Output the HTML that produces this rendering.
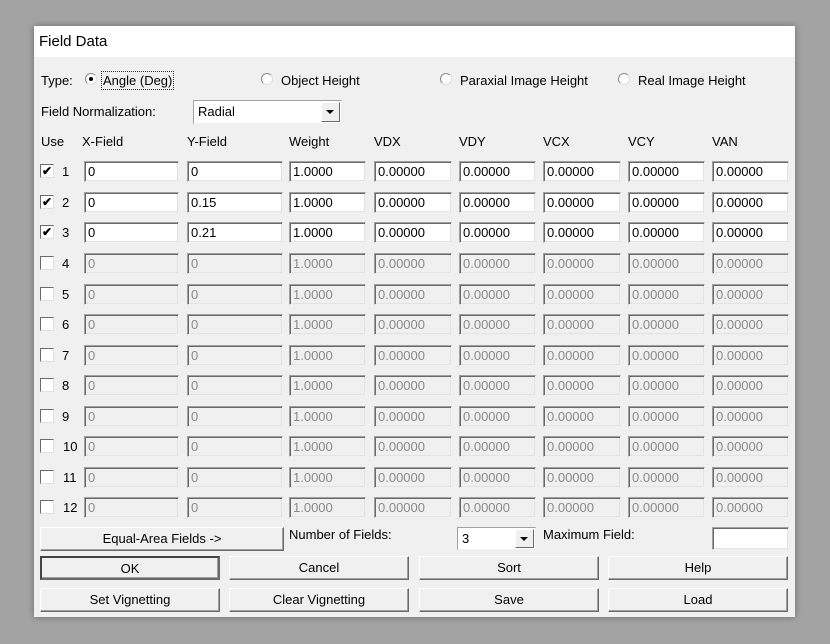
<!DOCTYPE html>
<html><head><meta charset="utf-8"><style>
*{box-sizing:border-box;margin:0;padding:0}
body{width:830px;height:644px;background:#a3a3a3;position:relative;overflow:hidden;font-family:"Liberation Sans",sans-serif;font-size:13px;color:#000}
.win{position:absolute;left:34px;top:26px;width:761px;height:591px;background:#f0f0f0;box-shadow:0 0 6px rgba(0,0,0,.35)}
.title{position:absolute;left:34px;top:26px;width:761px;height:31px;background:#fff;font-size:15px;padding:7px 0 0 5px}
.a{position:absolute;white-space:nowrap}
.in{position:absolute;height:21px;background:#fff;border-top:1px solid #a0a0a0;border-left:1px solid #a0a0a0;border-bottom:1px solid #f0f0f0;border-right:1px solid #f0f0f0;box-shadow:inset 1px 1px 0 #696969,inset -1px -1px 0 #e3e3e3;padding:2px 0 0 3px;font-size:13px;line-height:15px;overflow:hidden;white-space:nowrap}
.d .in{background:#f0f0f0;color:#8a8a8a}
.row{position:absolute;left:0;width:830px;height:21px}
.c1{left:84px;width:95px}.c2{left:187px;width:96px}.c3{left:289px;width:77px}.c4{left:374px;width:78px}.c5{left:459px;width:77px}.c6{left:543px;width:78px}.c7{left:628px;width:77px}.c8{left:712px;width:77px}
.cb{position:absolute;left:40px;top:3px;width:14px;height:14px;background:#fff;border:1px solid #6a6a6a;border-right-color:#e0e0e0;border-bottom-color:#e0e0e0;font-size:12px;line-height:12px;text-align:center;font-weight:bold}
.n{position:absolute;left:62px;top:3px}
.rad{position:absolute;width:12px;height:12px;border-radius:50%;background:#fff;border:1px solid #8a8a8a;border-right-color:#ddd;border-bottom-color:#ddd}
.btn{position:absolute;height:24px;background:#f0f0f0;border:1px solid #fff;border-right-color:#696969;border-bottom-color:#696969;box-shadow:inset -1px -1px 0 #a0a0a0;text-align:center;line-height:22px}
.combo{position:absolute;background:#fff;border:1px solid #a0a0a0;border-right-color:#f0f0f0;border-bottom-color:#f0f0f0;padding:3px 0 0 4px}
.arr{position:absolute;right:1px;top:1px;width:19px;bottom:1px;background:#f0f0f0;border:1px solid #fff;border-right-color:#696969;border-bottom-color:#696969}
.arr:after{content:"";position:absolute;left:4px;top:7px;border-left:4px solid transparent;border-right:4px solid transparent;border-top:4px solid #000}
</style></head><body>
<div class="win"></div>
<div class="title">Field Data</div>
<div class="a" style="left:41px;top:73px">Type:</div>
<div class="rad" style="left:85px;top:73px"><div style="position:absolute;left:3px;top:3px;width:4px;height:4px;border-radius:50%;background:#000"></div></div>
<div class="a" style="left:101px;top:71px;border:1px dotted #333;padding:1px">Angle (Deg)</div>
<div class="rad" style="left:261px;top:73px"></div><div class="a" style="left:281px;top:73px">Object Height</div>
<div class="rad" style="left:440px;top:73px"></div><div class="a" style="left:460px;top:73px">Paraxial Image Height</div>
<div class="rad" style="left:618px;top:73px"></div><div class="a" style="left:638px;top:73px">Real Image Height</div>
<div class="a" style="left:41px;top:104px">Field Normalization:</div>
<div class="combo" style="left:193px;top:100px;width:149px;height:24px">Radial<div class="arr"></div></div>
<div class="a" style="left:41px;top:134px">Use</div><div class="a" style="left:82px;top:134px">X-Field</div><div class="a" style="left:187px;top:134px">Y-Field</div><div class="a" style="left:289px;top:134px">Weight</div><div class="a" style="left:374px;top:134px">VDX</div><div class="a" style="left:459px;top:134px">VDY</div><div class="a" style="left:543px;top:134px">VCX</div><div class="a" style="left:628px;top:134px">VCY</div><div class="a" style="left:712px;top:134px">VAN</div>

<div class="row" style="top:161px"><div class="cb">✔</div><div class="n">1</div><div class="in c1">0</div><div class="in c2">0</div><div class="in c3">1.0000</div><div class="in c4">0.00000</div><div class="in c5">0.00000</div><div class="in c6">0.00000</div><div class="in c7">0.00000</div><div class="in c8">0.00000</div></div>
<div class="row" style="top:192px"><div class="cb">✔</div><div class="n">2</div><div class="in c1">0</div><div class="in c2">0.15</div><div class="in c3">1.0000</div><div class="in c4">0.00000</div><div class="in c5">0.00000</div><div class="in c6">0.00000</div><div class="in c7">0.00000</div><div class="in c8">0.00000</div></div>
<div class="row" style="top:222px"><div class="cb">✔</div><div class="n">3</div><div class="in c1">0</div><div class="in c2">0.21</div><div class="in c3">1.0000</div><div class="in c4">0.00000</div><div class="in c5">0.00000</div><div class="in c6">0.00000</div><div class="in c7">0.00000</div><div class="in c8">0.00000</div></div>
<div class="row d" style="top:253px"><div class="cb"></div><div class="n">4</div><div class="in c1">0</div><div class="in c2">0</div><div class="in c3">1.0000</div><div class="in c4">0.00000</div><div class="in c5">0.00000</div><div class="in c6">0.00000</div><div class="in c7">0.00000</div><div class="in c8">0.00000</div></div>
<div class="row d" style="top:284px"><div class="cb"></div><div class="n">5</div><div class="in c1">0</div><div class="in c2">0</div><div class="in c3">1.0000</div><div class="in c4">0.00000</div><div class="in c5">0.00000</div><div class="in c6">0.00000</div><div class="in c7">0.00000</div><div class="in c8">0.00000</div></div>
<div class="row d" style="top:314px"><div class="cb"></div><div class="n">6</div><div class="in c1">0</div><div class="in c2">0</div><div class="in c3">1.0000</div><div class="in c4">0.00000</div><div class="in c5">0.00000</div><div class="in c6">0.00000</div><div class="in c7">0.00000</div><div class="in c8">0.00000</div></div>
<div class="row d" style="top:345px"><div class="cb"></div><div class="n">7</div><div class="in c1">0</div><div class="in c2">0</div><div class="in c3">1.0000</div><div class="in c4">0.00000</div><div class="in c5">0.00000</div><div class="in c6">0.00000</div><div class="in c7">0.00000</div><div class="in c8">0.00000</div></div>
<div class="row d" style="top:375px"><div class="cb"></div><div class="n">8</div><div class="in c1">0</div><div class="in c2">0</div><div class="in c3">1.0000</div><div class="in c4">0.00000</div><div class="in c5">0.00000</div><div class="in c6">0.00000</div><div class="in c7">0.00000</div><div class="in c8">0.00000</div></div>
<div class="row d" style="top:406px"><div class="cb"></div><div class="n">9</div><div class="in c1">0</div><div class="in c2">0</div><div class="in c3">1.0000</div><div class="in c4">0.00000</div><div class="in c5">0.00000</div><div class="in c6">0.00000</div><div class="in c7">0.00000</div><div class="in c8">0.00000</div></div>
<div class="row d" style="top:436px"><div class="cb"></div><div class="n" style="left:63px">10</div><div class="in c1">0</div><div class="in c2">0</div><div class="in c3">1.0000</div><div class="in c4">0.00000</div><div class="in c5">0.00000</div><div class="in c6">0.00000</div><div class="in c7">0.00000</div><div class="in c8">0.00000</div></div>
<div class="row d" style="top:467px"><div class="cb"></div><div class="n" style="left:63px">11</div><div class="in c1">0</div><div class="in c2">0</div><div class="in c3">1.0000</div><div class="in c4">0.00000</div><div class="in c5">0.00000</div><div class="in c6">0.00000</div><div class="in c7">0.00000</div><div class="in c8">0.00000</div></div>
<div class="row d" style="top:497px"><div class="cb"></div><div class="n" style="left:63px">12</div><div class="in c1">0</div><div class="in c2">0</div><div class="in c3">1.0000</div><div class="in c4">0.00000</div><div class="in c5">0.00000</div><div class="in c6">0.00000</div><div class="in c7">0.00000</div><div class="in c8">0.00000</div></div>

<div class="btn" style="left:40px;top:527px;width:244px">Equal-Area Fields -&gt;</div>
<div class="a" style="left:289px;top:527px">Number of Fields:</div>
<div class="combo" style="left:457px;top:527px;width:79px;height:23px">3<div class="arr"></div></div>
<div class="a" style="left:543px;top:527px">Maximum Field:</div>
<div class="in" style="left:712px;top:527px;width:77px;height:23px"></div>
<div class="btn" style="left:40px;top:556px;width:180px;border:2px solid #696969;border-top-color:#444;border-left-color:#444">OK</div>
<div class="btn" style="left:229px;top:556px;width:180px">Cancel</div>
<div class="btn" style="left:419px;top:556px;width:180px">Sort</div>
<div class="btn" style="left:608px;top:556px;width:180px">Help</div>
<div class="btn" style="left:40px;top:588px;width:180px">Set Vignetting</div>
<div class="btn" style="left:229px;top:588px;width:180px">Clear Vignetting</div>
<div class="btn" style="left:419px;top:588px;width:180px">Save</div>
<div class="btn" style="left:608px;top:588px;width:180px">Load</div>
</body></html>
